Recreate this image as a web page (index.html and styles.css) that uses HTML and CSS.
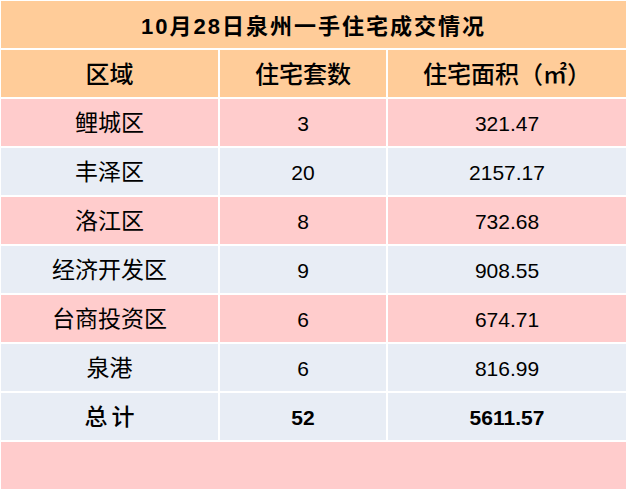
FILE: index.html
```html
<!DOCTYPE html>
<html lang="zh-CN">
<head>
<meta charset="utf-8">
<title>10月28日泉州一手住宅成交情况</title>
<link rel="stylesheet" href="styles.css">
</head>
<body>
<div class="sheet">
  <div class="cell title span">10月28日泉州一手住宅成交情况</div>
  <div class="cell head">区域</div>
  <div class="cell head">住宅套数</div>
  <div class="cell head">住宅面积（㎡）</div>

  <div class="cell pink">鲤城区</div>
  <div class="cell pink num">3</div>
  <div class="cell pink num">321.47</div>

  <div class="cell blue">丰泽区</div>
  <div class="cell blue num">20</div>
  <div class="cell blue num">2157.17</div>

  <div class="cell pink">洛江区</div>
  <div class="cell pink num">8</div>
  <div class="cell pink num">732.68</div>

  <div class="cell blue">经济开发区</div>
  <div class="cell blue num">9</div>
  <div class="cell blue num">908.55</div>

  <div class="cell pink">台商投资区</div>
  <div class="cell pink num">6</div>
  <div class="cell pink num">674.71</div>

  <div class="cell blue">泉港</div>
  <div class="cell blue num">6</div>
  <div class="cell blue num">816.99</div>

  <div class="cell blue total-label">总计</div>
  <div class="cell blue num total">52</div>
  <div class="cell blue num total">5611.57</div>

  <div class="cell pink span"></div>
</div>
</body>
</html>
```

FILE: styles.css
```css
html, body {
  margin: 0;
  padding: 0;
  background: #ffffff;
}

body {
  width: 628px;
  height: 491px;
  overflow: hidden;
}

.sheet {
  display: grid;
  grid-template-columns: 217px 166px 238px;
  grid-auto-rows: 47px;
  gap: 2px;
  padding: 1px 0 0 1px;
  font-family: "Liberation Sans", "Noto Sans CJK SC", sans-serif;
  color: #000000;
}

.cell {
  display: flex;
  align-items: center;
  justify-content: center;
  font-size: 23px;
  line-height: 1;
  padding-top: 2px;
  box-sizing: border-box;
}

.span {
  grid-column: 1 / span 3;
}

.title {
  background: #ffcc99;
  font-size: 22px;
  font-weight: bold;
  letter-spacing: 2px;
  padding-top: 4px;
}

.head {
  background: #ffcc99;
  font-size: 24px;
  font-weight: 500;
}

.pink {
  background: #ffcccc;
}

.blue {
  background: #e8edf5;
}

.num {
  font-size: 21px;
}

.total {
  font-weight: bold;
}

.total-label {
  font-weight: 500;
  letter-spacing: 4px;
  padding-left: 4px;
}
```
